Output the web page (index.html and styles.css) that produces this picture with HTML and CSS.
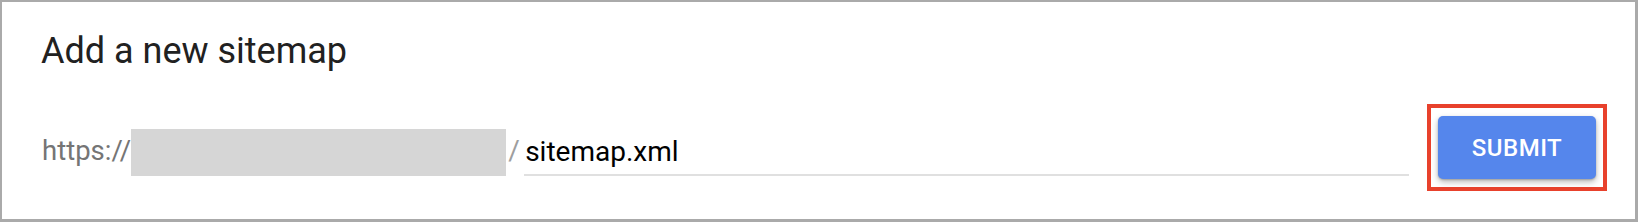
FILE: index.html
```html
<!DOCTYPE html>
<html lang="en">
<head>
<meta charset="utf-8">
<title>Add a new sitemap</title>
<link rel="stylesheet" href="styles.css">
</head>
<body>
<div class="card">
  <h2 class="title">Add a new sitemap</h2>
  <div class="row">
    <div class="field">
      <span class="prefix">https://</span>
      <span class="redacted" aria-hidden="true"></span>
      <span class="slash">/</span>
      <div class="input"><span class="value">sitemap.xml</span></div>
    </div>
    <div class="highlight">
      <button class="submit" type="button">SUBMIT</button>
    </div>
  </div>
</div>
</body>
</html>
```
FILE: styles.css
```css
html, body {
  margin: 0;
  padding: 0;
  background: #ffffff;
}
body {
  font-family: Roboto, "Liberation Sans", Arial, sans-serif;
}
.card {
  box-sizing: border-box;
  width: 1638px;
  height: 222px;
  border-style: solid;
  border-color: #aaaaaa;
  border-width: 2px 3px 3px 2px;
  padding: 28px 28px 0 39px;
  background: #ffffff;
}
.title {
  margin: 0;
  font-size: 36px;
  line-height: 42px;
  font-weight: 400;
  color: #212121;
}
.row {
  display: flex;
  align-items: flex-start;
  margin-top: 32px;
  height: 87px;
}
.field {
  flex: 1;
  display: flex;
  align-items: flex-start;
  margin-top: 25px;
  height: 47px;
  margin-right: 18px;
}
.prefix {
  font-size: 27.5px;
  line-height: 47px;
  color: #757575;
  margin-top: -2px;
  margin-left: 1px;
}
.redacted {
  width: 375px;
  height: 47px;
  background: #d6d6d6;
  margin-left: 0;
}
.slash {
  font-size: 28px;
  line-height: 47px;
  color: #9e9e9e;
  margin-left: 2px;
  margin-top: -2px;
  width: 16px;
}
.input {
  flex: 1;
  box-sizing: border-box;
  height: 47px;
  border-bottom: 2px solid #e0e0e0;
  display: flex;
  align-items: flex-end;
}
.value {
  font-size: 28px;
  line-height: 30px;
  color: #000000;
  padding-left: 1px;
  margin-bottom: 7px;
}
.highlight {
  box-sizing: border-box;
  border: 4px solid #e8412c;
  padding: 8px 7px;
  height: 87px;
}
.submit {
  display: block;
  width: 158px;
  height: 63px;
  border: none;
  border-radius: 5px;
  background: #5586ec;
  color: #ffffff;
  font-family: Roboto, "Liberation Sans", Arial, sans-serif;
  font-size: 24px;
  font-weight: 500;
  letter-spacing: 0.5px;
  box-shadow: 0 3px 6px rgba(0, 0, 0, 0.28), 0 1px 2px rgba(0, 0, 0, 0.2);
  padding: 0;
  cursor: pointer;
}
```
